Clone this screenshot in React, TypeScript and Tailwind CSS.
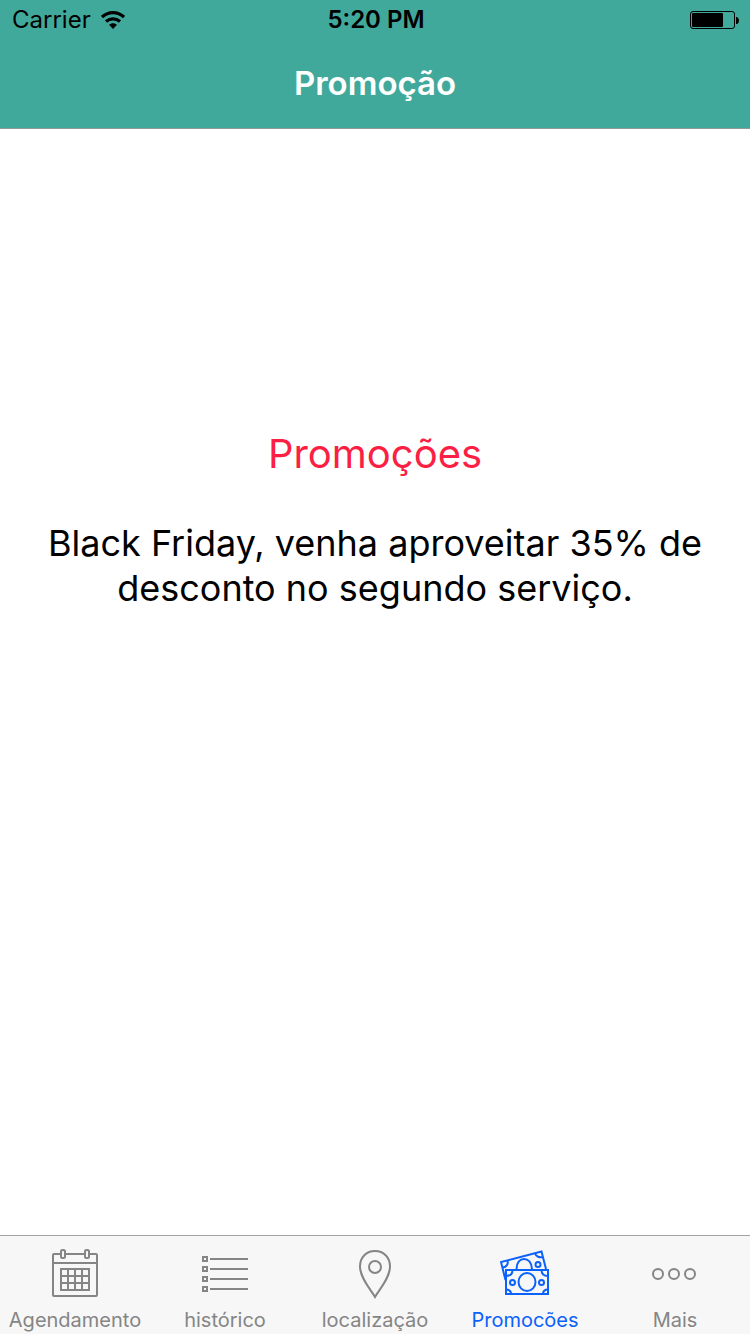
import type { ReactNode } from "react";

const iconProps = {
  viewBox: "0 0 50 50",
  fill: "none",
  stroke: "currentColor",
  strokeWidth: 2,
  className: "size-[50px] shrink-0",
  "aria-hidden": true,
};

function CalendarIcon() {
  return (
    <svg {...iconProps}>
      <path d="M11 5H4a1 1 0 0 0-1 1v40a1 1 0 0 0 1 1h42a1 1 0 0 0 1-1V6a1 1 0 0 0-1-1h-7M15 5h20M3 14h44" />
      <rect x="11" y="1" width="4" height="8" rx="1.5" />
      <rect x="35" y="1" width="4" height="8" rx="1.5" />
      <path d="M11 20h28v21H11zM18 20v21M25 20v21M32 20v21M11 27h28M11 34h28" />
    </svg>
  );
}

function ListIcon() {
  return (
    <svg {...iconProps}>
      {[10, 20, 30, 40].map((y) => (
        <g key={y}>
          <rect x="3" y={y - 2} width="4" height="4" />
          <path d={`M10 ${y}h38`} />
        </g>
      ))}
    </svg>
  );
}

function PinIcon() {
  return (
    <svg {...iconProps}>
      <path d="M25 48C21 41 10 29 10 17.500C10 8 16.500 2 25 2S40 8 40 17.500C40 29 29 41 25 48Z" />
      <circle cx="25" cy="18" r="6" />
    </svg>
  );
}

function MoneyIcon() {
  return (
    <svg {...iconProps}>
      <path d="M5.500 31L1 13L41.500 2.500L46 20" />
      <path d="M16.500 20C16.500 6.500 31.500 6.500 32 20" />
      <circle cx="38" cy="15.500" r="2.500" />
      <path d="M7.500 11.500C8.500 15 6.500 18 3 18.500M35 4.500C36 7.500 39.500 9 43 8" />
      <rect x="6" y="21" width="42" height="24" />
      <ellipse cx="27" cy="33" rx="8.500" ry="9" />
      <circle cx="12.500" cy="33.500" r="2.500" />
      <circle cx="41.500" cy="33.500" r="2.500" />
      <path d="M12.500 21C12.500 25 10 27 6 27M41.500 21C41.500 25 44 27 48 27M6 40.500C9 40.500 11 42 11 45M48 40.500C45 40.500 43 42 43 45" />
    </svg>
  );
}

function MoreIcon() {
  return (
    <svg {...iconProps}>
      <circle cx="8" cy="25" r="5" />
      <circle cx="24" cy="25" r="5" />
      <circle cx="40" cy="25" r="5" />
    </svg>
  );
}

function WifiIcon() {
  return (
    <svg viewBox="0 0 24 20" className="h-5 w-6" fill="none" stroke="currentColor" strokeWidth="3.2" role="img" aria-label="Wi-Fi">
      <path d="M1 7C7.500 1.200 16.500 1.200 23 7" />
      <path d="M5 11.500C9 7.900 15 7.900 19 11.500" />
      <path d="M8 14.800C10.300 12.700 13.700 12.700 16 14.800L12 18.900Z" fill="currentColor" stroke="none" />
    </svg>
  );
}

function BatteryIcon() {
  return (
    <svg viewBox="0 0 50 20" className="h-5 w-[50px]" role="img" aria-label="Bateria">
      <rect x="0.500" y="1.500" width="44" height="17" rx="2.500" fill="none" stroke="currentColor" />
      <rect x="2" y="3" width="31" height="14" rx="1" fill="currentColor" />
      <path d="M46 7h1q2 1 2 3.500t-2 3.500h-1z" fill="currentColor" />
    </svg>
  );
}

const tabs: { label: string; icon: ReactNode; active?: boolean }[] = [
  { label: "Agendamento", icon: <CalendarIcon /> },
  { label: "histórico", icon: <ListIcon /> },
  { label: "localização", icon: <PinIcon /> },
  { label: "Promocões", icon: <MoneyIcon />, active: true },
  { label: "Mais", icon: <MoreIcon /> },
];

export default function App() {
  return (
    <div className="flex min-h-screen flex-col bg-white font-['Inter','Liberation_Sans',sans-serif] text-black">
      <header className="border-b border-[#8e9c99] bg-[#41a99b]">
        <div className="grid h-10 grid-cols-3 items-center pr-2.5 pl-3 text-2xl leading-[34px]">
          <div className="flex items-center gap-2.5">
            <span>Carrier</span>
            <WifiIcon />
          </div>
          <span className="text-center font-semibold">5:20 PM</span>
          <div className="flex justify-end">
            <BatteryIcon />
          </div>
        </div>
        <h1 className="flex h-22 items-center justify-center text-[33px] font-semibold text-white">Promoção</h1>
      </header>

      <main className="flex flex-1 flex-col items-center px-8 pt-[300px] text-center">
        <h2 className="text-[40px] leading-[50px] text-[#fc1f44]">Promoções</h2>
        <p className="mt-[42px] text-[36px] leading-[45px]">Black Friday, venha aproveitar 35% de desconto no segundo serviço.</p>
      </main>

      <nav className="grid grid-cols-5 border-t border-[#a3a3a3] bg-[#f7f7f7]">
        {tabs.map((tab) => (
          <button
            key={tab.label}
            type="button"
            aria-current={tab.active ? "page" : undefined}
            className={`flex flex-col items-center pt-[13px] ${tab.active ? "text-[#0b61fb]" : "text-[#858585]"}`}
          >
            {tab.icon}
            <span className="mt-2 text-xl leading-[27px]">{tab.label}</span>
          </button>
        ))}
      </nav>
    </div>
  );
}
